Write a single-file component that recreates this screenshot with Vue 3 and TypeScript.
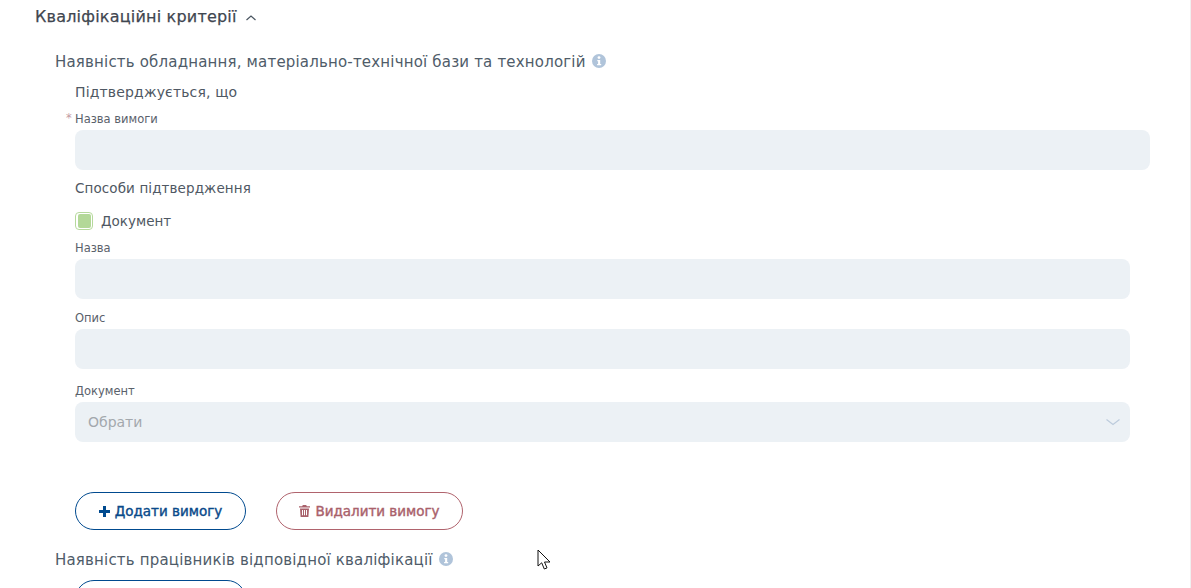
<script setup lang="ts">
interface Field { label: string }
const fields: Field[] = [{ label: 'Назва' }, { label: 'Опис' }]
</script>

<template>
  <div class="page">
    <header class="title-row">
      <h2 class="title">Кваліфікаційні критерії</h2>
      <svg class="caret" width="12" height="8" viewBox="0 0 12 8"><path d="M1.500 6 L6 2 L10.500 6" fill="none" stroke="#4a5560" stroke-width="1.2" /></svg>
    </header>

    <section class="criterion">
      <div class="heading">
        <span>Наявність обладнання, матеріально-технічної бази та технологій</span>
        <svg class="info" width="14" height="14" viewBox="0 0 14 14"><circle cx="7" cy="7" r="7" fill="#b0c4da" /><circle cx="7" cy="3.600" r="1.400" fill="#fff" /><path d="M5.300 6h2.900v4.100h1v1.200H5.100v-1.200h1V7.200h-.8z" fill="#fff" /></svg>
      </div>

      <div class="body">
        <div class="confirm">Підтверджується, що</div>
        <label class="label req-label"><span class="star">*</span>Назва вимоги</label>
        <div class="input"></div>

        <div class="methods">Способи підтвердження</div>
        <div class="check-row">
          <span class="check"><span class="check-fill"></span></span>
          <span class="check-text">Документ</span>
        </div>

        <div class="sub">
          <template v-for="f in fields" :key="f.label">
            <label class="label">{{ f.label }}</label>
            <div class="input sub-input"></div>
          </template>
          <label class="label last-label">Документ</label>
          <div class="input select">
            <span class="placeholder">Обрати</span>
            <svg width="14" height="7" viewBox="0 0 14 7"><path d="M.5 .5 L7 5.500 L13.500 .5" fill="none" stroke="#bccbdc" stroke-width="1.2" /></svg>
          </div>
        </div>

        <div class="actions">
          <button class="btn add" type="button">
            <svg width="11" height="11" viewBox="0 0 11 11"><path d="M4 0h3v4h4v3H7v4H4V7H0V4h4z" fill="#004a8f" /></svg>
            Додати вимогу
          </button>
          <button class="btn remove" type="button">
            <svg width="11" height="12" viewBox="0 0 11 12"><path d="M3.800 0h3.400l.6 1.200H11v1.300H0V1.200h3.200zM1 3.400h9l-.6 8.600H1.600zM3 5v5.200h1V5zm2 0v5.200h1V5zm2 0v5.200h1V5z" fill="#a9616b" /></svg>
            Видалити вимогу
          </button>
        </div>
      </div>
    </section>

    <section class="criterion second">
      <div class="heading">
        <span>Наявність працівників відповідної кваліфікації</span>
        <svg class="info" width="14" height="14" viewBox="0 0 14 14"><circle cx="7" cy="7" r="7" fill="#b0c4da" /><circle cx="7" cy="3.600" r="1.400" fill="#fff" /><path d="M5.300 6h2.900v4.100h1v1.200H5.100v-1.200h1V7.200h-.8z" fill="#fff" /></svg>
      </div>
      <div class="body">
        <button class="btn add next" type="button"></button>
      </div>
    </section>

    <svg class="cursor" width="16" height="22" viewBox="0 0 16 22"><path d="M1 1 L1 17 L4.700 13.800 L7.300 20 L10 18.900 L7.500 13 L13 13 Z" fill="#fff" stroke="#111" stroke-width="1" /></svg>
  </div>
</template>

<style>
html, body { margin: 0; overflow: hidden; background: #fff; }
</style>

<style scoped>
.page {
  position: relative;
  box-sizing: border-box;
  width: 1191px;
  height: 588px;
  overflow: hidden;
  padding: 7px 40px 0 35px;
  background: #fff;
  border-right: 1px solid #f0f0f0;
  font-family: "DejaVu Sans", "Noto Sans", sans-serif;
  color: #4b5563;
}
.title-row { display: flex; align-items: center; gap: 8px; height: 20px; }
.title { margin: 0; font-size: 16px; font-weight: 400; letter-spacing: .2px; line-height: 20px; color: #3f4650; -webkit-text-stroke: .25px #3f4650; }
.caret { margin-top: 1px; }
.criterion { margin: 25px 0 0 20px; }
.criterion.second { margin-top: 20px; }
.heading { display: flex; align-items: center; gap: 6px; height: 20px; font-size: 15px; letter-spacing: .18px; line-height: 20px; color: #4f5c69; }
.info { margin-top: -2px; }
.body { padding-left: 20px; }
.confirm { margin-top: 10px; height: 20px; font-size: 14px; letter-spacing: .15px; line-height: 20px; color: #4f5863; }
.label { display: block; height: 14px; font-size: 11.500px; line-height: 14px; color: #5a616b; }
.req-label { position: relative; margin-top: 10px; margin-bottom: 4px; }
.star { position: absolute; left: -9px; top: -1px; color: #c39aa2; }
.input { height: 40px; border-radius: 8px; background: #ecf1f5; }
.methods { margin-top: 8px; height: 20px; font-size: 13.500px; letter-spacing: .1px; line-height: 20px; color: #4f5863; }
.check-row { display: flex; align-items: center; gap: 8px; height: 18px; margin-top: 14px; }
.check { box-sizing: border-box; display: flex; align-items: center; justify-content: center; width: 18px; height: 18px; border: 1px solid #b6d99c; border-radius: 4px; background: #fff; }
.check-fill { width: 13px; height: 14px; border-radius: 2px; background: #b3d898; }
.check-text { font-size: 13.500px; color: #4f5863; }
.sub { margin-top: 11px; margin-right: 20px; }
.sub > .label { margin-bottom: 4px; }
.sub-input { margin-bottom: 12px; }
.sub > .last-label { margin-top: 15px; margin-bottom: 4px; }
.select { display: flex; align-items: center; justify-content: space-between; padding: 0 10px 0 13px; box-sizing: border-box; }
.placeholder { font-size: 14px; color: #a3a8ad; }
.actions { display: flex; gap: 30px; margin-top: 50px; }
.btn { display: inline-flex; align-items: center; justify-content: center; gap: 5px; box-sizing: border-box; height: 38px; border-radius: 19px; background: #fff; font-family: inherit; font-size: 13.500px; font-weight: 400; padding: 0; -webkit-text-stroke: .4px currentColor; }
.add { width: 171px; border: 1px solid #004a8f; color: #0a4a8a; }
.remove { width: 187px; border: 1px solid #b0636d; color: #a9616b; }
.next { margin-top: 10px; }
.cursor { position: absolute; left: 537px; top: 549px; }
</style>
